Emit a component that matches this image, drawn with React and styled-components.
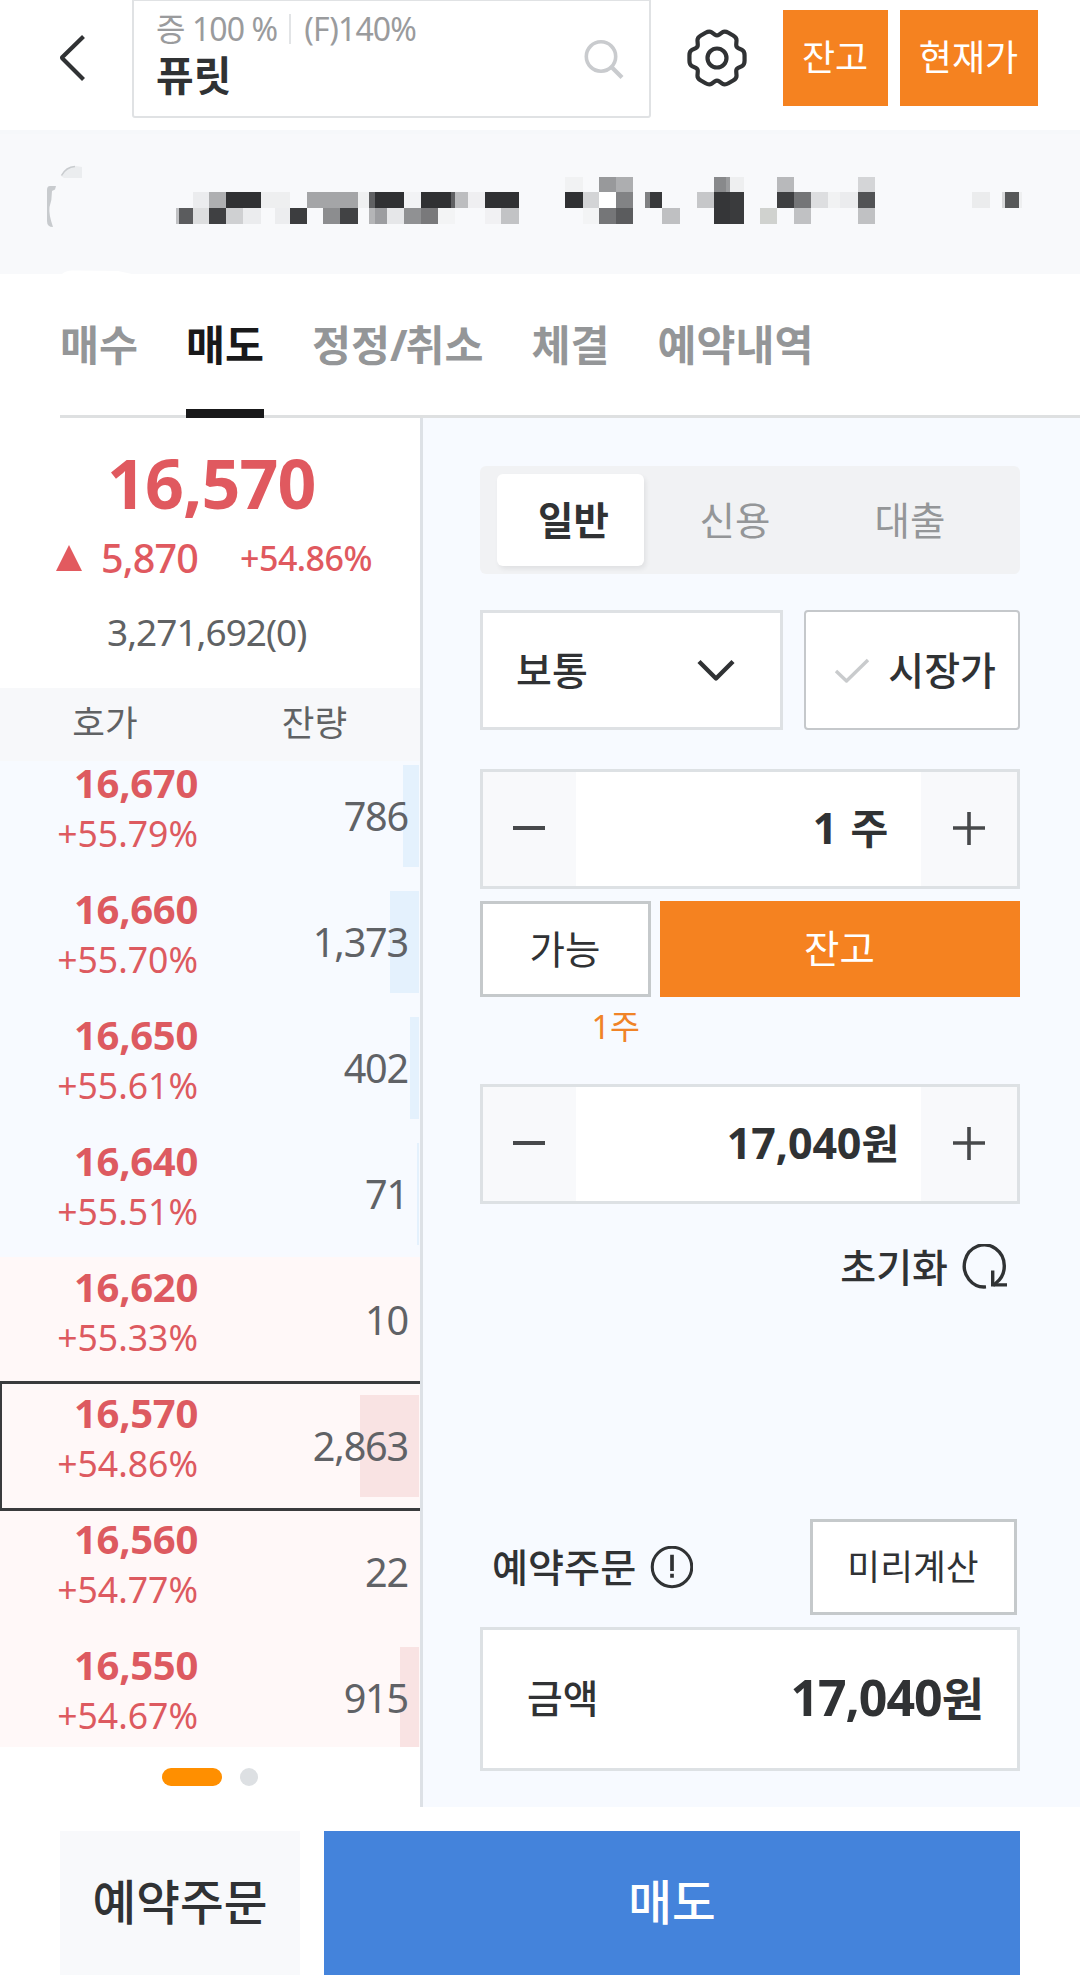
import React from 'react';
import styled, { createGlobalStyle, css } from 'styled-components';

const GlobalStyle = createGlobalStyle`
  *, *::before, *::after { box-sizing: border-box; }
  body { margin: 0; background: #fff; }
  button { font: inherit; color: inherit; margin: 0; padding: 0; border: 0; background: none; }
  svg { display: block; flex: none; }
`;

const ink = '#303234';
const gray = '#949698';
const orange = '#f58220';
const red = '#e0595f';

const Screen = styled.div`
  width: 1080px;
  height: 1986px;
  overflow: hidden;
  display: flex;
  flex-direction: column;
  background: #fff;
  color: ${ink};
  font-family: 'Noto Sans', 'Noto Sans CJK KR', sans-serif;
  white-space: nowrap;
`;

/* ---------- header ---------- */

const Header = styled.header`
  height: 130px;
  flex: none;
  display: flex;
  align-items: flex-start;
`;

const BackButton = styled.button`
  width: 132px;
  height: 115px;
  padding-left: 58px;
  display: flex;
  align-items: center;
`;

const SearchBox = styled.div`
  width: 519px;
  height: 118px;
  border: 2px solid #e0e2e4;
  border-top-width: 1px;
  border-radius: 0 0 3px 3px;
  padding: 11px 25px 0 22px;
  display: flex;
  justify-content: space-between;
`;

const StockInfo = styled.div`
  display: flex;
  flex-direction: column;
`;

const MarginLine = styled.div`
  display: flex;
  align-items: center;
  height: 34px;
  font-size: 32px;
  line-height: 34px;
  letter-spacing: -0.9px;
  color: #9a9b9d;
`;

const Divider = styled.i`
  width: 2px;
  height: 30px;
  margin: 0 13px 0 12px;
  background: #e2e4e6;
`;

const StockName = styled.strong`
  font-size: 41px;
  line-height: 50px;
  margin-top: 4px;
  font-weight: 700;
`;

const SearchIconWrap = styled.div`
  padding-top: 28px;
`;

const SettingsButton = styled.button`
  width: 132px;
  height: 116px;
  display: flex;
  align-items: center;
  justify-content: center;
`;

const HeaderButton = styled.button`
  width: ${(p) => p.$w}px;
  height: 96px;
  margin: 10px 12px 0 0;
  padding: 0 1px 5px 0;
  background: ${orange};
  color: #fff;
  font-size: 36px;
`;

const AccountBar = styled.div`
  height: 144px;
  flex: none;
  background: #f8f9fb;
  border-top: 4px solid #f6f8fa;
`;

/* ---------- tabs ---------- */

const Tabs = styled.nav`
  height: 144px;
  flex: none;
  margin-left: 60px;
  display: flex;
  gap: 48px;
  border-bottom: 3px solid #dee0e1;
`;

const Tab = styled.button`
  height: 144px;
  padding-bottom: 7px;
  font-size: 42.4px;
  font-weight: 700;
  color: ${(p) => (p.$active ? '#19191a' : gray)};
  border-top: 9px solid transparent;
  border-bottom: 9px solid ${(p) => (p.$active ? '#19191a' : 'transparent')};
`;

const Slash = styled.span`
  letter-spacing: -2px;
`;

const Body = styled.main`
  height: 1389px;
  flex: none;
  display: flex;
`;

/* ---------- order book ---------- */

const BookPanel = styled.section`
  width: 423px;
  border-right: 3px solid #dde1e6;
  display: flex;
  flex-direction: column;
`;

const Quote = styled.div`
  height: 270px;
  padding-top: 34px;
  flex: none;
  color: ${red};
`;

const Price = styled.div`
  padding-left: 107px;
  font-size: 68px;
  line-height: 61px;
  font-weight: 700;
  letter-spacing: -0.9px;
`;

const ChangeLine = styled.div`
  display: flex;
  align-items: center;
  height: 40px;
  margin-top: 25px;
  padding-left: 56px;
`;

const Change = styled.span`
  margin-left: 19px;
  width: 139px;
  font-size: 39.5px;
  line-height: 40px;
  font-weight: 500;
  letter-spacing: -0.8px;
`;

const ChangeRate = styled.span`
  font-size: 34px;
  line-height: 40px;
  font-weight: 500;
  letter-spacing: -0.5px;
`;

const Volume = styled.div`
  margin-top: 34px;
  padding-left: 107px;
  line-height: 40px;
  font-size: 37px;
  letter-spacing: -1px;
  color: #606264;
`;

const BookHead = styled.div`
  height: 73px;
  flex: none;
  background: #f7f8fa;
  color: #606264;
  display: grid;
  grid-template-columns: 210px 209px;
  align-items: start;
  justify-items: center;
  font-size: 35.5px;
  line-height: 68px;
`;

const BookList = styled.div`
  height: 986px;
  flex: none;
  display: flex;
  flex-direction: column;
`;

/* The first row sits partly under the column header and the last one is cut by the pager. */
const Row = styled.div`
  position: relative;
  flex: none;
  height: ${(p) => (p.$first ? 118 : p.$last ? 112 : 126)}px;
  padding-top: ${(p) => (p.$first ? 0 : 8)}px;
  display: flex;
  justify-content: space-between;
  align-items: flex-start;
  background: ${(p) => (p.$side === 'ask' ? '#f7faff' : '#fff8f8')};
  ${(p) =>
    p.$current &&
    css`
      z-index: 1;
      &::after {
        content: '';
        position: absolute;
        inset: -2px 0;
        border: solid #3a3b3d;
        border-width: 3px 0 3px 2px;
      }
    `}
`;

const RowPrice = styled.div`
  width: 198px;
  padding-top: 2px;
  text-align: right;
  color: #dd5a60;
`;

const RowValue = styled.div`
  font-size: 40px;
  line-height: 40px;
  font-weight: 700;
  letter-spacing: -0.3px;
`;

const RowRate = styled.div`
  margin-top: 12px;
  font-size: 35.6px;
  line-height: 36px;
`;

const Quantity = styled.div`
  position: relative;
  padding-right: 12px;
  font-size: 39.6px;
  line-height: 110px;
  letter-spacing: -1.2px;
  color: #606266;
`;

const DepthBar = styled.i`
  position: absolute;
  right: 1px;
  top: ${(p) => (p.$first ? 4 : 12)}px;
  height: ${(p) => (p.$last ? 100 : 102)}px;
  background: ${(p) => (p.$side === 'ask' ? '#e4f1fd' : '#f9e3e3')};
`;

const Pager = styled.div`
  display: flex;
  gap: 18px;
  padding: 21px 0 0 162px;
`;

const Dot = styled.i`
  width: ${(p) => (p.$active ? 60 : 18)}px;
  height: 18px;
  border-radius: 9px;
  background: ${(p) => (p.$active ? '#ff8f00' : '#dde0e3')};
`;

/* ---------- order form ---------- */

const FormPanel = styled.section`
  flex: 1;
  background: #f7faff;
  padding: 48px 60px 0 57px;
  display: flex;
  flex-direction: column;
`;

const Segments = styled.div`
  height: 108px;
  padding: 8px 17px;
  display: flex;
  border-radius: 6px;
  background: #f1f2f4;
`;

const Segment = styled.button`
  width: ${(p) => p.$w}px;
  height: 92px;
  padding: 0 0 5px ${(p) => p.$inset || 0}px;
  border-radius: 6px;
  font-size: 38.5px;
  color: ${gray};
  ${(p) =>
    p.$active &&
    css`
      background: #fff;
      color: ${ink};
      font-weight: 700;
      box-shadow: 2px 3px 5px rgba(0, 0, 0, 0.07);
    `}
`;

const TypeRow = styled.div`
  display: flex;
  justify-content: space-between;
  margin-top: 36px;
`;

const Select = styled.button`
  width: 303px;
  height: 120px;
  padding: 0 45px 0 33px;
  border: 3px solid #dee1e4;
  background: #fff;
  display: flex;
  align-items: center;
  justify-content: space-between;
  font-size: 39px;
  font-weight: 500;
`;

const MarketToggle = styled.button`
  width: 216px;
  height: 120px;
  padding: 0 22px 0 28px;
  border: 2px solid #c5c8cb;
  border-radius: 4px;
  background: #fff;
  display: flex;
  align-items: center;
  justify-content: space-between;
  font-size: 39px;
  font-weight: 500;
`;

const FieldText = styled.span`
  padding-bottom: 4px;
`;

const IconDrop = styled.span`
  padding-top: 1px;
`;

const Stepper = styled.div`
  height: 120px;
  margin-top: ${(p) => p.$mt}px;
  border: 3px solid #dde1e4;
  display: grid;
  grid-template-columns: 93px 1fr 96px;
  background: #f8f9fb;
`;

const StepButton = styled.button`
  display: flex;
  align-items: center;
  justify-content: center;
  padding-right: ${(p) => p.$pr || 0}px;
`;

const StepValue = styled.div`
  background: #fff;
  padding-right: ${(p) => p.$pr}px;
  line-height: 111px;
  text-align: right;
  font-size: 43px;
  font-weight: 700;
  letter-spacing: -0.1px;
  word-spacing: 2px;
`;

const Unit = styled.span`
  font-size: ${(p) => p.$size}px;
`;

const ButtonRow = styled.div`
  display: flex;
  gap: 9px;
  margin-top: 12px;
`;

const OutlineButton = styled.button`
  width: ${(p) => p.$w}px;
  height: 96px;
  padding: 0 1px 5px 0;
  border: 3px solid #c5c9cb;
  background: #fff;
  font-size: ${(p) => p.$size}px;
`;

const BalanceButton = styled.button`
  flex: 1;
  height: 96px;
  padding: 0 1px 6px 0;
  background: ${orange};
  color: #fff;
  font-size: 38.5px;
`;

const Available = styled.div`
  width: 160px;
  height: 40px;
  margin-top: 10px;
  line-height: 40px;
  text-align: right;
  font-size: 32.6px;
  color: #f08327;
`;

const ResetButton = styled.button`
  align-self: flex-end;
  display: flex;
  align-items: center;
  gap: 14px;
  height: 50px;
  margin: 38px 12px 0 0;
  font-size: 39px;
  font-weight: 500;
`;

const ReserveRow = styled.div`
  display: flex;
  align-items: center;
  height: 96px;
  margin-top: 227px;
  padding: 0 3px 0 12px;
`;

const ReserveLabel = styled.span`
  margin-right: 14px;
  padding-bottom: 5px;
  font-size: 39.2px;
  font-weight: 500;
`;

const Spacer = styled.span`
  flex: 1;
`;

const AmountBox = styled.div`
  height: 144px;
  margin-top: 12px;
  padding: 0 34px 4px 44px;
  border: 3px solid #dde1e4;
  background: #fff;
  display: flex;
  align-items: center;
  justify-content: space-between;
`;

const AmountLabel = styled.span`
  padding-bottom: 2px;
  font-size: 38.8px;
  font-weight: 500;
`;

const AmountValue = styled.strong`
  font-size: 50px;
  font-weight: 700;
  letter-spacing: -1px;
`;

/* ---------- footer ---------- */

const Footer = styled.footer`
  display: flex;
  gap: 24px;
  padding: 24px 60px 0;
`;

const FooterButton = styled.button`
  width: ${(p) => p.$w}px;
  height: 144px;
  padding-bottom: 7px;
  background: ${(p) => p.$bg};
  color: ${(p) => p.$fg};
  font-size: 47.5px;
  font-weight: 500;
`;

const MOSAIC = [
  [177, 15, [[565, 583, '#f1f2f3'], [599, 616, '#98999b'], [616, 633, '#adaeb0'], [714, 726, '#88898b'], [726, 730, '#9a9b9d'], [730, 744, '#eeeff0'], [777, 794, '#b8b9bb'], [858, 875, '#d4d5d7']]],
  [192, 16, [[193, 209, '#ebecee'], [209, 226, '#aeafb1'], [226, 261, '#303133'], [261, 290, '#eeeff0'], [307, 358, '#a4a5a7'], [358, 369, '#eff0f1'], [369, 375, '#606163'], [375, 404, '#303133'], [404, 421, '#f2f3f5'], [421, 451, '#303133'], [451, 455, '#606163'], [455, 468, '#bcbdbf'], [468, 485, '#efeff1'], [485, 519, '#303133'], [565, 583, '#303133'], [583, 599, '#d3d4d6'], [599, 616, '#ffffff'], [616, 633, '#828385'], [645, 650, '#7f8082'], [650, 662, '#38393b'], [697, 714, '#c6c7c9'], [714, 730, '#353638'], [730, 744, '#3a3b3d'], [777, 794, '#3e3f41'], [794, 811, '#747577'], [811, 828, '#dddee0'], [828, 840, '#f1f2f3'], [840, 858, '#ebecee'], [858, 875, '#525355'], [972, 990, '#ebeced'], [1002, 1005, '#d8d9da'], [1005, 1019, '#575859'], [1019, 1022, '#eeeff0']]],
  [208, 16, [[176, 179, '#c0c1c3'], [179, 193, '#5b5c5e'], [193, 209, '#dddedf'], [209, 226, '#3f4042'], [226, 243, '#cfd0d2'], [243, 261, '#ebecee'], [275, 290, '#ecedef'], [290, 307, '#3c3d3f'], [323, 340, '#8c8d8f'], [340, 358, '#414244'], [369, 375, '#b4b5b7'], [375, 387, '#9c9da0'], [387, 404, '#e6e7e9'], [404, 421, '#909193'], [421, 438, '#79797b'], [438, 455, '#f3f4f5'], [485, 501, '#f1f1f3'], [501, 519, '#c2c3c5'], [583, 599, '#f3f4f5'], [599, 616, '#757678'], [616, 633, '#5b5c5e'], [662, 680, '#bfc0c2'], [714, 730, '#353638'], [730, 744, '#3a3b3d'], [760, 777, '#d0d2cf'], [794, 811, '#c0c1c3'], [858, 875, '#c0c1c3']]],
];

function MaskedAccount() {
  return (
    <svg width="1080" height="140" viewBox="0 134 1080 140" shapeRendering="crispEdges">
      <g shapeRendering="auto">
        <path d="M61 176 Q67 166 76 166 L82 167 L82 178 L64 178Z" fill="#ebedef" />
        <path d="M61.500 175.500 Q66 167 75 166.500" fill="none" stroke="#c9cccf" strokeWidth="1.600" />
        <path d="M56 186 H50 Q47 186 47 190 V221 Q47 227 53 227 Q48.500 214 49.500 207 Q52 200 52 191 L55 189.500Z" fill="#c8cbce" />
        <path d="M62 274 Q66 270 74 270.500 L118 271 L132 274Z" fill="#fff" />
      </g>
      {MOSAIC.map(([y, h, cells]) =>
        cells.map(([x1, x2, fill]) => <rect key={`${y}-${x1}`} x={x1} y={y} width={x2 - x1} height={h} fill={fill} />)
      )}
    </svg>
  );
}

const gearPath = (() => {
  const pts = [];
  for (let i = 0; i < 6; i += 1) {
    const base = i * 60;
    [[-14, 28.4, 0.3], [14, 28.4, 0.3], [30, 22, 0.25]].forEach(([a, r, k]) => {
      const t = ((base + a) * Math.PI) / 180;
      pts.push([30 + r * Math.cos(t), 30 + r * Math.sin(t), k]);
    });
  }
  const mid = (a, b, k) => [a[0] + (b[0] - a[0]) * k, a[1] + (b[1] - a[1]) * k];
  return (
    pts
      .map((p, i) => {
        const prev = pts[(i + pts.length - 1) % pts.length];
        const next = pts[(i + 1) % pts.length];
        const a = mid(p, prev, p[2]);
        const b = mid(p, next, p[2]);
        return `${i ? 'L' : 'M'}${a[0].toFixed(2)} ${a[1].toFixed(2)}Q${p[0].toFixed(2)} ${p[1].toFixed(2)} ${b[0].toFixed(2)} ${b[1].toFixed(2)}`;
      })
      .join('') + 'Z'
  );
})();

const GearIcon = () => (
  <svg width="60" height="60" viewBox="0 0 60 60" fill="none" stroke={ink} strokeWidth="4.200">
    <path d={gearPath} strokeLinejoin="round" />
    <circle cx="30" cy="30" r="9.500" />
  </svg>
);

const BackIcon = () => (
  <svg width="30" height="50" viewBox="0 0 30 50" fill="none" stroke={ink} strokeWidth="4.200" strokeLinejoin="round">
    <path d="M25.500 3.500 L4.500 24 Q3.800 24.800 4.500 25.600 L25.500 46.500" />
  </svg>
);

const SearchIcon = () => (
  <svg width="40" height="40" viewBox="0 0 40 40" fill="none" stroke="#c9cbce" strokeWidth="3.600">
    <circle cx="17" cy="16.500" r="14.700" />
    <path d="M27.500 27 L38 37.500" strokeWidth="4.200" />
  </svg>
);

const ChevronIcon = () => (
  <svg width="38" height="24" viewBox="0 0 38 24" fill="none" stroke={ink} strokeWidth="4.400">
    <path d="M2 2.500 L19 19.500 L36 2.500" strokeLinejoin="round" />
  </svg>
);

const CheckIcon = () => (
  <svg width="36" height="26" viewBox="0 0 36 26" fill="none" stroke="#c9cbcd" strokeWidth="3.400">
    <path d="M2 13 L12.500 23 L34 2" strokeLinejoin="round" />
  </svg>
);

const MinusIcon = () => (
  <svg width="34" height="34" viewBox="0 0 34 34" stroke="#47494b" strokeWidth="4">
    <path d="M1 16 H33" />
  </svg>
);

const PlusIcon = () => (
  <svg width="34" height="34" viewBox="0 0 34 34" stroke="#47494b" strokeWidth="3.600">
    <path d="M1 16 H33 M17 0 V33" />
  </svg>
);

const ResetIcon = () => (
  <svg width="46" height="46" viewBox="0 0 46 46" fill="none" stroke={ink} strokeWidth="3.400">
    <path d="M24 42.900 A20 21 0 1 1 34 39 L31 41.500" />
    <path d="M30.700 26.500 V40.900 H45" />
  </svg>
);

const InfoIcon = () => (
  <svg width="43" height="43" viewBox="0 0 42 42" fill="none" stroke={ink}>
    <circle cx="21.500" cy="20.500" r="19.300" strokeWidth="3" />
    <path d="M21.500 8.500 V24.500 M21.500 27 V31" strokeWidth="3.600" />
  </svg>
);

const TriangleUp = () => (
  <svg width="26" height="26" viewBox="0 0 26 26">
    <path d="M13 0 L26 26 H0Z" fill="#e25a5f" />
  </svg>
);

const BOOK = [
  { side: 'ask', price: '16,670', rate: '+55.79%', qty: '786', bar: 16 },
  { side: 'ask', price: '16,660', rate: '+55.70%', qty: '1,373', bar: 29 },
  { side: 'ask', price: '16,650', rate: '+55.61%', qty: '402', bar: 9 },
  { side: 'ask', price: '16,640', rate: '+55.51%', qty: '71', bar: 2 },
  { side: 'bid', price: '16,620', rate: '+55.33%', qty: '10', bar: 0 },
  { side: 'bid', price: '16,570', rate: '+54.86%', qty: '2,863', bar: 59, current: true },
  { side: 'bid', price: '16,560', rate: '+54.77%', qty: '22', bar: 0 },
  { side: 'bid', price: '16,550', rate: '+54.67%', qty: '915', bar: 19 },
];

export default function App() {
  return (
    <Screen>
      <GlobalStyle />
      <Header>
        <BackButton><BackIcon /></BackButton>
        <SearchBox>
          <StockInfo>
            <MarginLine>
              <span>증 100 %</span>
              <Divider />
              <span>(F)140%</span>
            </MarginLine>
            <StockName>퓨릿</StockName>
          </StockInfo>
          <SearchIconWrap><SearchIcon /></SearchIconWrap>
        </SearchBox>
        <SettingsButton><GearIcon /></SettingsButton>
        <HeaderButton $w={105}>잔고</HeaderButton>
        <HeaderButton $w={138}>현재가</HeaderButton>
      </Header>

      <AccountBar><MaskedAccount /></AccountBar>

      <Tabs>
        <Tab>매수</Tab>
        <Tab $active>매도</Tab>
        <Tab>정정<Slash>/</Slash>취소</Tab>
        <Tab>체결</Tab>
        <Tab>예약내역</Tab>
      </Tabs>

      <Body>
        <BookPanel>
          <Quote>
            <Price>16,570</Price>
            <ChangeLine>
              <TriangleUp />
              <Change>5,870</Change>
              <ChangeRate>+54.86%</ChangeRate>
            </ChangeLine>
            <Volume>3,271,692(0)</Volume>
          </Quote>
          <BookHead><span>호가</span><span>잔량</span></BookHead>
          <BookList>
            {BOOK.map((r, i) => {
              const first = i === 0;
              const last = i === BOOK.length - 1;
              return (
                <Row key={r.price} $side={r.side} $current={r.current} $first={first} $last={last}>
                  <RowPrice>
                    <RowValue>{r.price}</RowValue>
                    <RowRate>{r.rate}</RowRate>
                  </RowPrice>
                  <DepthBar $side={r.side} $first={first} $last={last} style={{ width: r.bar }} />
                  <Quantity>{r.qty}</Quantity>
                </Row>
              );
            })}
          </BookList>
          <Pager><Dot $active /><Dot /></Pager>
        </BookPanel>

        <FormPanel>
          <Segments>
            <Segment $w={147} $inset={6} $active>일반</Segment>
            <Segment $w={182}>신용</Segment>
            <Segment $w={168}>대출</Segment>
          </Segments>

          <TypeRow>
            <Select>
              <FieldText>보통</FieldText>
              <IconDrop><ChevronIcon /></IconDrop>
            </Select>
            <MarketToggle>
              <IconDrop><CheckIcon /></IconDrop>
              <FieldText>시장가</FieldText>
            </MarketToggle>
          </TypeRow>

          <Stepper $mt={39}>
            <StepButton $pr={2}><MinusIcon /></StepButton>
            <StepValue $pr={33}>1 <Unit $size={41}>주</Unit></StepValue>
            <StepButton><PlusIcon /></StepButton>
          </Stepper>

          <ButtonRow>
            <OutlineButton $w={171} $size={38.5}>가능</OutlineButton>
            <BalanceButton>잔고</BalanceButton>
          </ButtonRow>
          <Available>1주</Available>

          <Stepper $mt={37}>
            <StepButton $pr={2}><MinusIcon /></StepButton>
            <StepValue $pr={22}>17,040<Unit $size={41}>원</Unit></StepValue>
            <StepButton><PlusIcon /></StepButton>
          </Stepper>

          <ResetButton><FieldText>초기화</FieldText><ResetIcon /></ResetButton>

          <ReserveRow>
            <ReserveLabel>예약주문</ReserveLabel>
            <InfoIcon />
            <Spacer />
            <OutlineButton $w={207} $size={35.7}>미리계산</OutlineButton>
          </ReserveRow>

          <AmountBox>
            <AmountLabel>금액</AmountLabel>
            <AmountValue>17,040<Unit $size={46}>원</Unit></AmountValue>
          </AmountBox>
        </FormPanel>
      </Body>

      <Footer>
        <FooterButton $w={240} $bg="#f8f9fb" $fg={ink}>예약주문</FooterButton>
        <FooterButton $w={696} $bg="#4483db" $fg="#fff">매도</FooterButton>
      </Footer>
    </Screen>
  );
}
